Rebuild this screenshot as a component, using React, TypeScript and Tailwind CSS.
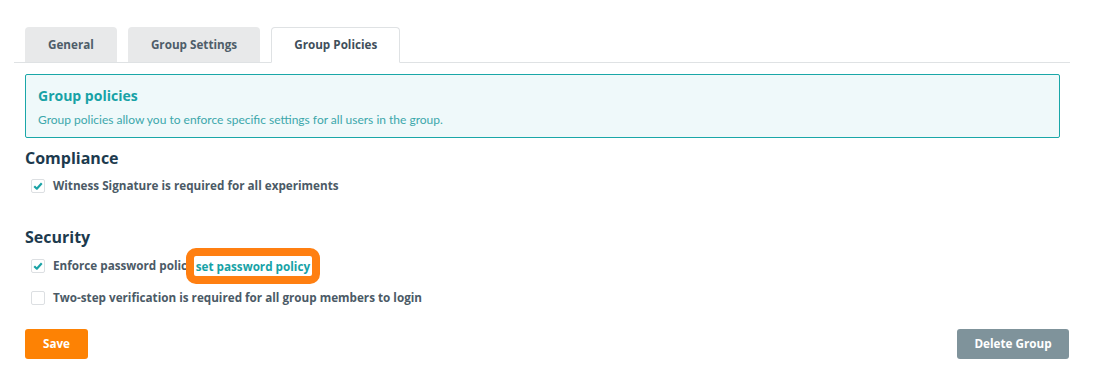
import React, { useState } from 'react';

type Tab = { id: string; label: string };

const tabs: Tab[] = [
  { id: 'general', label: 'General' },
  { id: 'settings', label: 'Group Settings' },
  { id: 'policies', label: 'Group Policies' },
];

const Checkbox: React.FC<{ checked: boolean; onChange: () => void }> = ({ checked, onChange }) => (
  <button
    onClick={onChange}
    className="flex items-center justify-center w-[14px] h-[14px] border border-[#dcdfe2] rounded-[2px] bg-white shrink-0"
  >
    {checked && (
      <svg viewBox="0 0 12 12" className="w-[10px] h-[10px]">
        <path d="M1.5 6.2 L4.6 9.2 L10.5 2.8" fill="none" stroke="#1aa3a6" strokeWidth="2.6" strokeLinejoin="round" />
      </svg>
    )}
  </button>
);

const App: React.FC = () => {
  const [active, setActive] = useState('policies');
  const [witness, setWitness] = useState(true);
  const [password, setPassword] = useState(true);
  const [twoStep, setTwoStep] = useState(false);

  return (
    <div className="w-[1095px] h-[392px] bg-white font-['Open_Sans',sans-serif] pt-[27px]">
      <div className="ml-[14px] w-[1056px] flex gap-[11px] pl-[11px] border-b border-[#dfe2e4] h-[36px]">
        {tabs.map(tab => (
          <button
            key={tab.id}
            onClick={() => setActive(tab.id)}
            className={
              active === tab.id
                ? 'h-[36px] px-[22px] text-[11.7px] font-bold text-[#3f4f5b] bg-white border border-[#dfe2e4] border-b-white rounded-t-[4px]'
                : 'h-[35px] px-[23px] text-[11.7px] font-bold text-[#4e5d69] bg-[#e8e9ea] rounded-t-[4px]'
            }
          >
            {tab.label}
          </button>
        ))}
      </div>

      <div className="px-[25px]">
        <div className="mt-[11px] w-[1035px] h-[64px] border border-[#1aa7a8] rounded-[2px] bg-[#eff9fa] px-[12px] pt-[11px]">
          <div className="text-[14px] font-bold text-[#17a2a6] leading-[20px]">Group policies</div>
          <div className="text-[12px] text-[#3ca7ab] leading-[18px] mt-[5px] font-['Lato',sans-serif]">
            Group policies allow you to enforce specific settings for all users in the group.
          </div>
        </div>

        <h2 className="mt-[9px] text-[16px] font-bold text-[#1c3a4e] leading-[22px]">Compliance</h2>
        <div className="mt-[9px] flex items-center gap-[8px] pl-[6px] h-[16px]">
          <Checkbox checked={witness} onChange={() => setWitness(!witness)} />
          <span className="text-[11.7px] font-bold text-[#4b5a66]">Witness Signature is required for all experiments</span>
        </div>

        <h2 className="mt-[32px] text-[16px] font-bold text-[#1c3a4e] leading-[22px]">Security</h2>
        <div className="flex items-center gap-[8px] pl-[6px] h-[36px]">
          <Checkbox checked={password} onChange={() => setPassword(!password)} />
          <span className="text-[11.7px] font-bold text-[#4b5a66] flex items-center">
            Enforce password policy
            <a
              href="#"
              className="relative -ml-[8px] inline-block border-[8px] border-[#ff7f11] rounded-[10px] bg-white px-[2px] leading-[20px] text-[#16a2a6]"
            >
              set password policy
            </a>
          </span>
        </div>
        <div className="mt-[6px] flex items-center gap-[8px] pl-[6px] h-[16px]">
          <Checkbox checked={twoStep} onChange={() => setTwoStep(!twoStep)} />
          <span className="text-[11.7px] font-bold text-[#4b5a66]">Two-step verification is required for all group members to login</span>
        </div>

        <div className="mt-[23px] flex justify-between w-[1044px]">
          <button className="h-[30px] w-[63px] rounded-[3px] bg-[#fd8204] text-white text-[11.7px] font-bold">Save</button>
          <button className="h-[30px] w-[112px] rounded-[3px] bg-[#7f939b] text-white text-[11.7px] font-bold">Delete Group</button>
        </div>
      </div>
    </div>
  );
};

export default App;
